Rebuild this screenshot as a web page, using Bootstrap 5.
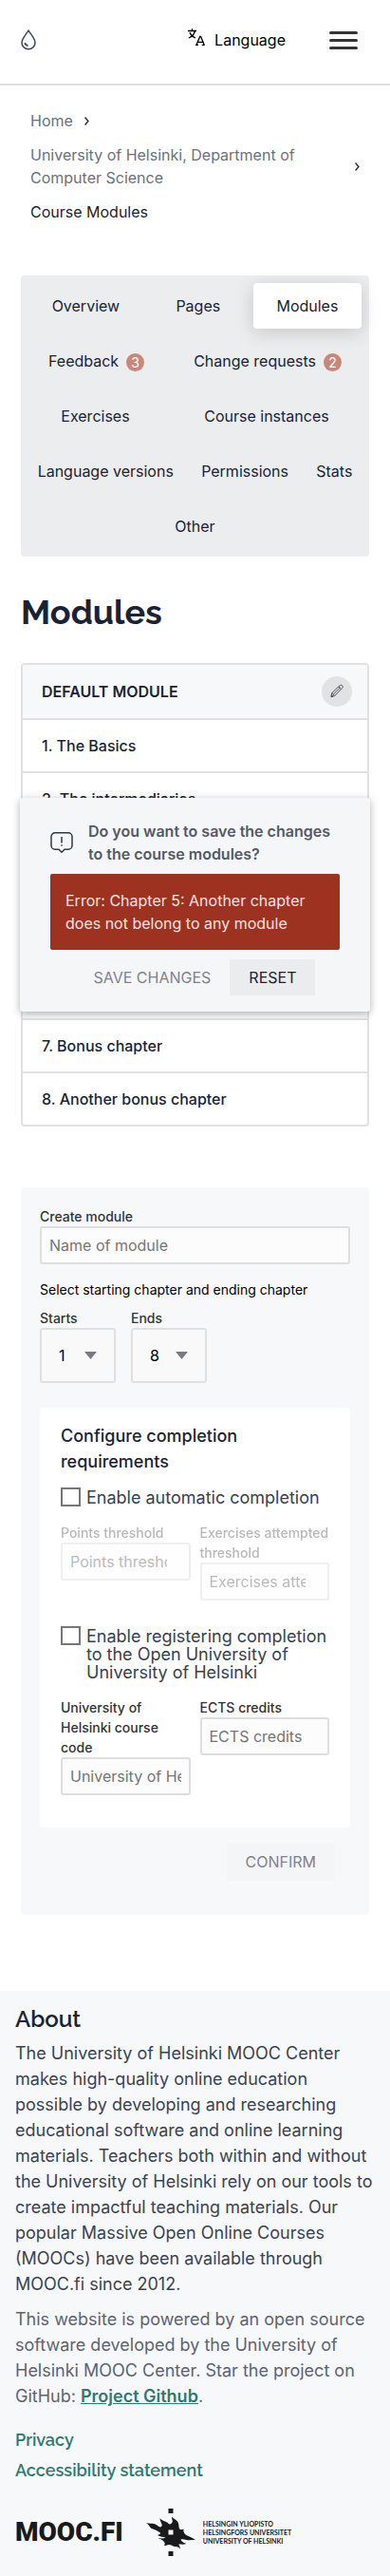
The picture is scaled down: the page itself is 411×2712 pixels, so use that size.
<!DOCTYPE html>
<html lang="en">
<head>
<meta charset="utf-8">
<meta name="viewport" content="width=device-width, initial-scale=1">
<title>Course Modules</title>
<link href="https://cdn.jsdelivr.net/npm/bootstrap@5.3.0/dist/css/bootstrap.min.css" rel="stylesheet">
<style>
  :root { --ink: #1a2333; --line: #e0e1e3; --pale: #f7f8fa; --green: #2e7a70; }
  body { font-family: Inter, "Open Sans", sans-serif; font-size: 16px; line-height: 24px; color: var(--ink); background: #fff; }
  .heading-font { font-family: Raleway, Lato, sans-serif; }
  .site-header { height: 90px; border-bottom: 2px solid #dedede; padding: 0 34px 4px 22px; }
  .lang-btn { color: #000; gap: 10px; margin-right: 46px; }
  .lang-btn svg { margin-bottom: 6px; }
  .burger span { display: block; width: 30px; height: 3px; border-radius: 2px; background: #333; }
  .burger { gap: 5px; }

  .crumbs { padding: 19px 32px 0; }
  .crumbs li { padding: 6px 0; gap: 12px; }
  .crumbs a { color: #6b717d; }

  .page-main { padding: 49px 22px 80px; }
  .tab-box { background: #ebedee; border-radius: 4px; padding: 8px; gap: 10px; }
  .tab-box a { flex: 1 0 auto; height: 48px; padding: 0 8px; gap: 8px; color: var(--ink); border-radius: 4px; }
  .tab-box a.active { background: #fff; box-shadow: 0 4px 20px rgba(0,0,0,.16); }
  .count { width: 19px; height: 19px; border-radius: 50%; background: #c9877a; color: #fff; font-size: 14px; line-height: 19px; margin-top: 2px; }

  .page-title { font-size: 36px; line-height: 44px; font-weight: 700; margin: 36px 0 32px; }

  .chapters { border: 2px solid var(--line); border-radius: 4px; overflow: hidden; }
  .chapters > * { height: 56px; padding: 0 20px; border-bottom: 2px solid var(--line); font-weight: 500; }
  .chapters > :last-child { border-bottom: 0; height: 54px; }
  .chapters .chapters-head { height: 58px; background: var(--pale); padding-right: 16px; font-weight: 600; }
  .chapters-next { margin-top: 144px; }
  .edit-btn { width: 32px; height: 32px; background: #e1e2e4; }

  .save-dialog { top: 142px; left: -1px; right: -1px; padding: 23px 32px 17px; background: #f5f6f8; border-radius: 3px; box-shadow: 0 2px 8px rgba(0,0,0,.3); }
  .save-msg { color: #535a66; font-weight: 600; gap: 16px; }
  .error-box { background: #9e3220; color: #f3e3e0; border-radius: 2px; padding: 16px; margin: 9px 0 10px; }
  .act { border: 0; border-radius: 0; height: 38px; padding: 0 20px; font-size: 16px; line-height: 24px; color: var(--ink); background: transparent; }
  .act-fill { background: #ebecee; }
  .act:disabled { color: #7e838d; }
  .act-wide { height: 40px; background: #f4f5f7; }

  .create-box { background: var(--pale); border-radius: 4px; padding: 20px 20px 36px; margin-top: 64px; }
  .field-label, .field-note { display: block; font-size: 14px; line-height: 21px; font-weight: 500; color: #333; }
  .field-note { font-weight: 400; color: #000; margin: 16px 0 9px; }
  .field-in { display: block; width: 100%; height: 40px; border: 2px solid #dedede; border-radius: 3px; background: #fcfcfc; padding: 0 8px; font-size: 16px; color: #333; }
  .field-in::placeholder { color: #757575; opacity: 1; }
  .pick { display: block; width: 80px; height: 58px; border: 2px solid #e0e0e0; border-radius: 3px; appearance: none; padding: 0 18px; color: #000; font-size: 16px;
    background: #f9f9f9 url("data:image/svg+xml,%3Csvg xmlns='http://www.w3.org/2000/svg' viewBox='0 0 13 8'%3E%3Cpath d='M0 0h13L6.500 8z' fill='%23767b85'/%3E%3C/svg%3E") no-repeat right 18px center / 13px 8px; }
  .rules { background: #fff; border-radius: 4px; padding: 16px 22px 34px; margin: 26px 0 16px; }
  .rules h2 { font-size: 18px; line-height: 27px; font-weight: 500; margin: 0 0 14px; }
  .tick-row { gap: 6px; font-size: 18px; line-height: 19px; color: #37414f; margin-bottom: 17px; }
  .tick-row label { padding-top: 1px; }
  .tick-row input { appearance: none; flex: none; width: 21px; height: 20px; margin: 0; border: 2px solid #767676; background: #fff; }
  .tick-row input:checked { background: #2e7a70; }
  .pair { display: grid; grid-template-columns: 1fr 1fr; gap: 10px; align-items: start; }
  .dimmed { opacity: .5; margin-bottom: 27px; }
  .dimmed .field-label { opacity: .7; }

  .site-footer { background: var(--pale); padding: 16px 16px 21px; }
  .site-footer h2 { font-size: 24px; line-height: 27px; font-weight: 600; margin: 0 0 9px; }
  .site-footer p { font-size: 18px; line-height: 27px; color: #3b4350; margin: 0 0 10px; }
  .site-footer p.soft { color: #5d6470; margin-bottom: 17px; }
  .site-footer a { color: var(--green); }
  .foot-link { font-size: 18px; line-height: 32px; font-weight: 600; }
  .logos { color: #1a1a1a; font-weight: 700; }
  .mooc { font-family: Roboto, sans-serif; font-size: 28px; font-weight: 900; line-height: 50px; }
  .uni { font-family: Lato, sans-serif; font-size: 7px; line-height: 9px; }
</style>
</head>
<body>
<header class="site-header d-flex align-items-center">
  <a href="#" aria-label="Home" class="me-auto d-flex">
    <svg width="16" height="22" viewBox="0 0 16 22" fill="none" stroke="#3c4554" stroke-width="1.500"><path d="M8 1.200C5.500 5 1 9.500 1 14a7 6.800 0 0 0 14 0C15 9.500 10.500 5 8 1.200z"/><path d="M4.300 14.200c.3 1.700 1.400 2.800 3.200 3" stroke-width="1.800"/></svg>
  </a>
  <button type="button" class="btn p-0 border-0 d-flex align-items-center lang-btn">
    <svg width="18" height="18" viewBox="0 0 18 18" fill="none" stroke="#000" stroke-width="1.300"><path d="M0 2.500h9M4.500.2v2.300M7.500 2.500C6.700 6 4 8.800 1 10M2 4.300c1 2.500 3.300 4.700 6 5.700"/><path d="M9 17.300l3.700-8.800h.9l3.600 8.800M10.300 14.300h5.600M8 17.300h3M14.800 17.300h3"/></svg>
    Language
  </button>
  <button type="button" class="btn p-0 border-0 d-flex flex-column burger" aria-label="Menu"><span></span><span></span><span></span></button>
</header>

<nav aria-label="Breadcrumb">
  <ol class="crumbs list-unstyled m-0">
    <li class="d-flex align-items-center"><a href="#" class="text-decoration-none">Home</a>
      <svg width="5" height="9" viewBox="0 0 5 9" fill="none" stroke="#333" stroke-width="1.500"><path d="M.6.600l3.300 3.900L.6 8.400"/></svg></li>
    <li class="d-flex align-items-center justify-content-between"><a href="#" class="text-decoration-none">University of Helsinki, Department of Computer Science</a>
      <svg class="flex-shrink-0" width="5" height="9" viewBox="0 0 5 9" fill="none" stroke="#333" stroke-width="1.500"><path d="M.6.600l3.300 3.900L.6 8.400"/></svg></li>
    <li aria-current="page">Course Modules</li>
  </ol>
</nav>

<main class="page-main">
  <nav class="tab-box d-flex flex-wrap text-center" aria-label="Course">
    <a href="#" class="d-flex align-items-center justify-content-center text-decoration-none">Overview</a>
    <a href="#" class="d-flex align-items-center justify-content-center text-decoration-none">Pages</a>
    <a href="#" class="active d-flex align-items-center justify-content-center text-decoration-none" aria-current="page">Modules</a>
    <a href="#" class="d-flex align-items-center justify-content-center text-decoration-none">Feedback <span class="count">3</span></a>
    <a href="#" class="d-flex align-items-center justify-content-center text-decoration-none">Change requests <span class="count">2</span></a>
    <a href="#" class="d-flex align-items-center justify-content-center text-decoration-none">Exercises</a>
    <a href="#" class="d-flex align-items-center justify-content-center text-decoration-none">Course instances</a>
    <a href="#" class="d-flex align-items-center justify-content-center text-decoration-none">Language versions</a>
    <a href="#" class="d-flex align-items-center justify-content-center text-decoration-none">Permissions</a>
    <a href="#" class="d-flex align-items-center justify-content-center text-decoration-none">Stats</a>
    <a href="#" class="d-flex align-items-center justify-content-center text-decoration-none">Other</a>
  </nav>

  <h1 class="page-title heading-font">Modules</h1>

  <div class="position-relative">
    <section class="chapters">
      <div class="chapters-head d-flex align-items-center justify-content-between">DEFAULT MODULE
        <button type="button" class="btn border-0 rounded-circle p-0 edit-btn d-flex align-items-center justify-content-center" aria-label="Edit module">
          <svg width="16" height="16" viewBox="0 0 16 16" fill="none" stroke="#4b5360" stroke-width="1"><path d="M2 13.500l.8-4L11 1.800c1-.9 2-.6 2.700.1s.8 1.700-.1 2.600L5.700 12.600z"/><path d="M2.800 9.500l2.900 3.100M9.800 2.900l2.900 2.900M4.300 11l7.500-7.300M2 13.500l1.800-.4-1.300-1.400z"/></svg>
        </button>
      </div>
      <div class="d-flex align-items-center">1. The Basics</div>
      <div class="d-flex align-items-center">2. The intermediaries</div>
    </section>
    <section class="chapters chapters-next">
      <div class="chapters-head"></div>
      <div class="d-flex align-items-center">7. Bonus chapter</div>
      <div class="d-flex align-items-center">8. Another bonus chapter</div>
    </section>

    <div class="save-dialog position-absolute" role="dialog" aria-label="Save changes">
      <div class="save-msg d-flex align-items-center">
        <svg class="flex-shrink-0" width="24" height="24" viewBox="0 0 24 24" fill="none" stroke="#2f3947" stroke-width="1.500"><path d="M5 1.800h14a4 4 0 0 1 4 4v9.400a4 4 0 0 1-4 4h-4l-3 3-3-3H5a4 4 0 0 1-4-4V5.800a4 4 0 0 1 4-4z"/><path d="M12 6v6.500M12 14.200v1.600"/></svg>
        <span>Do you want to save the changes to the course modules?</span>
      </div>
      <div class="error-box" role="alert">Error: Chapter 5: Another chapter does not belong to any module</div>
      <div class="d-flex justify-content-center">
        <button type="button" class="act" disabled>SAVE CHANGES</button>
        <button type="button" class="act act-fill">RESET</button>
      </div>
    </div>
  </div>

  <form class="create-box">
    <label class="field-label" for="mod-name">Create module</label>
    <input class="field-in" id="mod-name" type="text" placeholder="Name of module">
    <div class="field-note">Select starting chapter and ending chapter</div>
    <div class="d-flex gap-3">
      <div><label class="field-label" for="starts">Starts</label><select class="pick" id="starts"><option>1</option></select></div>
      <div><label class="field-label" for="ends">Ends</label><select class="pick" id="ends"><option>8</option></select></div>
    </div>

    <div class="rules">
      <h2>Configure completion requirements</h2>
      <div class="tick-row d-flex align-items-start"><input type="checkbox" id="auto"><label for="auto">Enable automatic completion</label></div>
      <div class="pair dimmed">
        <div><label class="field-label" for="pts">Points threshold</label><input class="field-in" id="pts" type="number" placeholder="Points threshold" disabled></div>
        <div><label class="field-label" for="att">Exercises attempted threshold</label><input class="field-in" id="att" type="number" placeholder="Exercises attempted threshold" disabled></div>
      </div>
      <div class="tick-row d-flex align-items-start"><input type="checkbox" id="open"><label for="open">Enable registering completion to the Open University of University of Helsinki</label></div>
      <div class="pair">
        <div><label class="field-label" for="code">University of Helsinki course code</label><input class="field-in" id="code" type="text" placeholder="University of Helsinki course code"></div>
        <div><label class="field-label" for="ects">ECTS credits</label><input class="field-in" id="ects" type="number" placeholder="ECTS credits"></div>
      </div>
    </div>
    <div class="d-flex justify-content-end me-3">
      <button type="button" class="act act-wide" disabled>CONFIRM</button>
    </div>
  </form>
</main>

<footer class="site-footer">
  <h2 class="heading-font">About</h2>
  <p>The University of Helsinki MOOC Center makes high-quality online education possible by developing and researching educational software and online learning materials. Teachers both within and without the University of Helsinki rely on our tools to create impactful teaching materials. Our popular Massive Open Online Courses (MOOCs) have been available through MOOC.fi since 2012.</p>
  <p class="soft">This website is powered by an open source software developed by the University of Helsinki MOOC Center. Star the project on GitHub: <a href="#" class="fw-semibold">Project Github</a>.</p>
  <div class="d-flex flex-column align-items-start heading-font">
    <a href="#" class="foot-link text-decoration-none">Privacy</a>
    <a href="#" class="foot-link text-decoration-none">Accessibility statement</a>
  </div>
  <div class="d-flex align-items-center mt-4 logos">
    <span class="mooc">MOOC.FI</span>
    <svg class="ms-4 flex-shrink-0" width="52" height="50" viewBox="0 0 52 50" fill="#1a1a1a"><path d="M23.500 0h5v5h-5zM23.500 45h5v5h-5z"/><path fill-rule="evenodd" d="M0 15c3 1.200 6 .2 9 1.200 2.500.8 3.500 2.800 6 3.300 1.500-.5 2-1.500 1.500-3C16 14.500 14.500 13 14.500 10c2 3 5 3 7.500 4.500 1.500 1 2 2 3 2 2-.5 3-2 2.700-4-.2-1.500-1-2.500-.7-4 1 2 4 2.500 6 5 2 2.800 1 5.500 2 7.500.8 1.500 2 1.500 4.500.5-.5 2 0 3.500 1.500 5.500 2.500 2 7.500 3.500 11 6-3.500 0-6.500.5-9.500 0-2.500-.5-4.500-1-6-.5.500 2 3 3.500 6 4.500-2.500 1-5.500.500-8 .5 0 2 1.500 2.500 1.500 5-1.500-2.500-4-2-6-2.500-2.500-.5-3.500-2-6-2-1.800 0-3 1.500-5 1 .5-1 1-1.500.5-3-.8-2-2.500-3-7-5 3 .5 5.500 1 8-.5-3-1-5.500-.5-8.500-2.500 1.500-.5 3-1 3-2.500C9.500 21.500 6.500 22 4.500 20 2.800 18 2.500 16.500 0 15zM23.500 22.500v5h5v-5z"/></svg>
    <span class="uni ms-2">HELSINGIN YLIOPISTO<br>HELSINGFORS UNIVERSITET<br>UNIVERSITY OF HELSINKI</span>
  </div>
</footer>
<script src="https://cdn.jsdelivr.net/npm/bootstrap@5.3.0/dist/js/bootstrap.bundle.min.js"></script>
</body>
</html>
